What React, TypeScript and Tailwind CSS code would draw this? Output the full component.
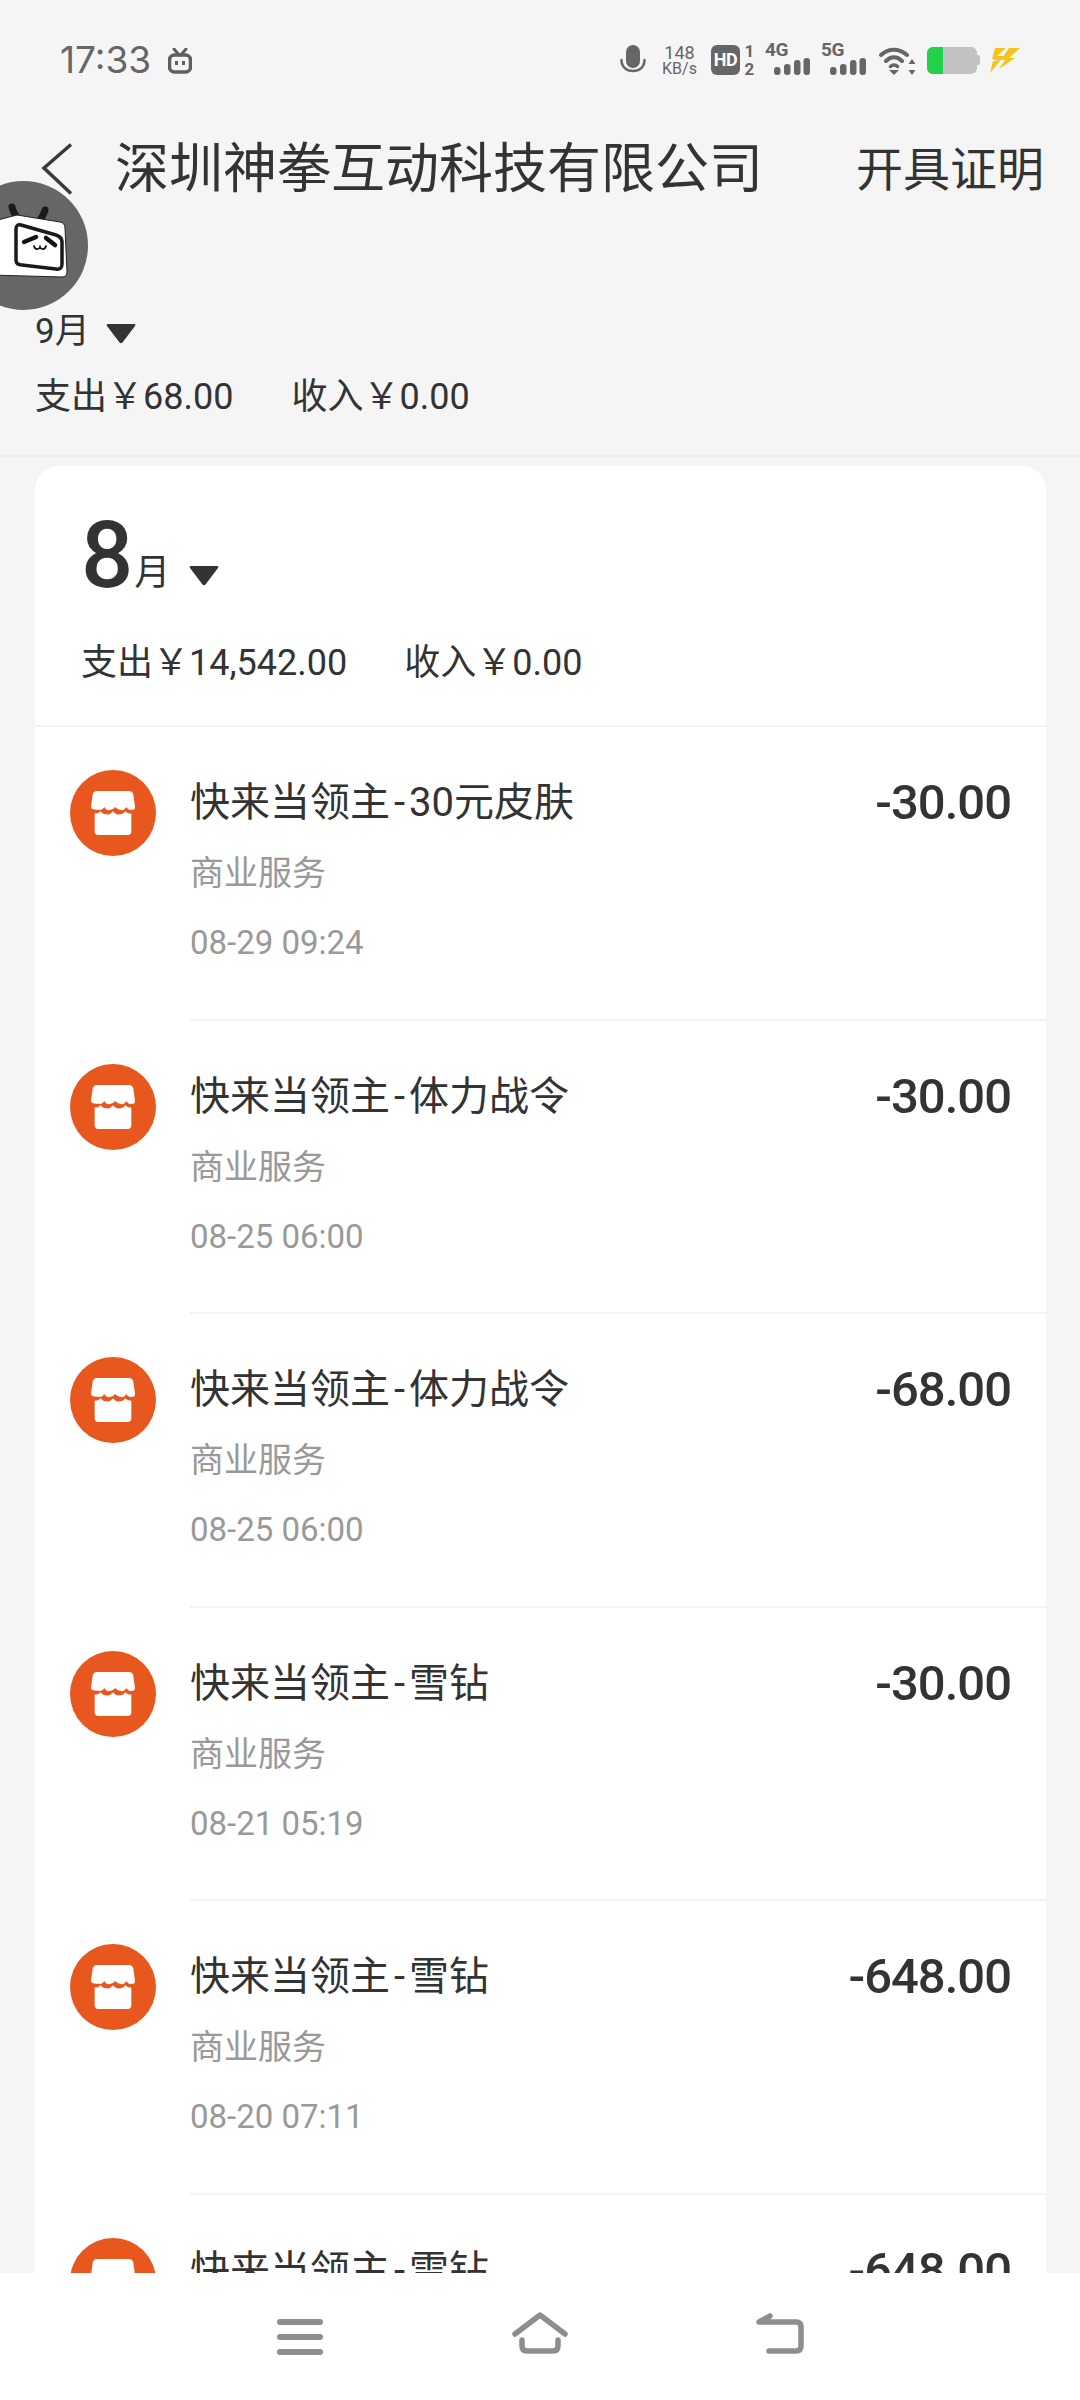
import React from 'react';

const FONT = '"Roboto", "Noto Sans CJK SC", sans-serif';

const rows = [
  { title: '快来当领主-30元皮肤', time: '08-29 09:24', amount: '-30.00' },
  { title: '快来当领主-体力战令', time: '08-25 06:00', amount: '-30.00' },
  { title: '快来当领主-体力战令', time: '08-25 06:00', amount: '-68.00' },
  { title: '快来当领主-雪钻', time: '08-21 05:19', amount: '-30.00' },
  { title: '快来当领主-雪钻', time: '08-20 07:11', amount: '-648.00' },
  { title: '快来当领主-雪钻', amount: '-648.00' },
];

const Signal = ({ label }: { label: string }) => (
  <div className="relative w-[45px] h-[30px]">
    <span className="absolute left-0 top-[-4px] text-[19px] leading-[17px] font-bold text-[#666] tracking-[-0.5px]">{label}</span>
    <svg className="absolute left-[9px] top-[13px]" width="36" height="17" viewBox="0 0 36 17" fill="#666">
      <rect x="0" y="9" width="6.5" height="8" rx="3" />
      <rect x="10" y="6" width="6.5" height="11" rx="3" />
      <rect x="20" y="2" width="6.5" height="15" rx="3" />
      <rect x="29.5" y="0" width="6.5" height="17" rx="3" />
    </svg>
  </div>
);

const StatusBar = () => (
  <div className="h-[120px] flex items-center justify-between pl-[60px] pr-[60px] shrink-0">
    <div className="flex items-center gap-[17px]">
      <span className="text-[37px] leading-[44px] text-[#666]" style={{ fontFamily: '"Inter", sans-serif' }}>17:33</span>
      <svg width="24" height="26" viewBox="0 0 24 26" fill="none" className="mt-[1px]">
        <path d="M6 1l5 6M18 1l-5 6" stroke="#5f5f5f" strokeWidth="3" strokeLinecap="round" />
        <rect x="1.5" y="7" width="21" height="17" rx="5" stroke="#5f5f5f" strokeWidth="3.5" />
        <path d="M8.5 13v4M15.5 13v4" stroke="#5f5f5f" strokeWidth="3" />
      </svg>
    </div>
    <div className="flex items-center">
      <svg width="26" height="30" viewBox="0 0 26 30" fill="none">
        <rect x="6" y="0" width="14" height="23" rx="7" fill="#666" />
        <path d="M1.5 15c0 7 5 11 11.500 11s11.500-4 11.500-11" stroke="#666" strokeWidth="2.500" strokeLinecap="round" />
      </svg>
      <div className="ml-[16px] w-[35px] text-center text-[#666] whitespace-nowrap">
        <div className="text-[18px] leading-[16px]">148</div>
        <div className="text-[16px] leading-[15px]">KB/s</div>
      </div>
      <div className="ml-[14px] w-[29px] h-[30px] rounded-[6px] bg-[#666] text-white text-[18px] leading-[30px] font-bold text-center tracking-[-0.5px]">HD</div>
      <div className="ml-[4px] w-[11px] text-[17px] leading-[18px] font-bold text-[#666] text-center">
        <div>1</div>
        <div>2</div>
      </div>
      <div className="ml-[10px]"><Signal label="4G" /></div>
      <div className="ml-[11px]"><Signal label="5G" /></div>
      <svg className="ml-[13px]" width="36" height="29" viewBox="0 0 36 29" fill="none">
        <path d="M2 9c7.500-7 18-7 26 0M7 15c5-5 11-5 16 0" stroke="#666" strokeWidth="4" strokeLinecap="round" />
        <path d="M11.500 20.500c2-2 5-2 7 0" stroke="#666" strokeWidth="3.500" strokeLinecap="round" />
        <path d="M10 24h10l-5 5z" fill="#666" />
        <path d="M33 13l3.500 5h-7zM33 29l-3.500-5h7z" fill="#666" />
      </svg>
      <div className="ml-[12px] flex items-center">
        <div className="w-[50px] h-[27px] rounded-[6px] bg-[#c2c2c2] overflow-hidden">
          <div className="w-[16px] h-full bg-[#22d04a]" />
        </div>
        <div className="w-[3px] h-[10px] rounded-r-[2px] bg-[#c2c2c2]" />
      </div>
      <svg className="ml-[10px]" width="30" height="25" viewBox="0 0 30 25" fill="#f6c21c">
        <path d="M5 0h11L7 8h7L0 25 3 13h5L2 11z" />
        <path d="M19 0h11L19 10h6L9 21 15 12h-4z" />
      </svg>
    </div>
  </div>
);

const Avatar = () => (
  <div className="absolute left-[-41px] top-[181px] w-[129px] h-[129px] rounded-full bg-[#666] overflow-hidden">
    <svg width="129" height="129" viewBox="-41 181 129 129" fill="none">
      <path d="M12 207c1 5 3 8 6 12M45 210c-1 4-3 7-5 10" stroke="#1a1a1a" strokeWidth="7" strokeLinecap="round" />
      <path d="M-10 222L17 215L60 222Q65 223 65 228L67 272Q67 277 62 277L-10 275z" fill="#fff" stroke="#222" strokeWidth="1" />
      <path d="M21 225L56 235Q62 237 62 242L62 264Q62 270 56 269L22 265Q16 265 16 260L16 229Q16 224 21 225z" fill="#fff" stroke="#1a1a1a" strokeWidth="3.500" />
      <path d="M24 242L36 237M46 238L55 245" stroke="#111" strokeWidth="4.500" strokeLinecap="round" />
      <path d="M34 246c1 4 5 4 6 1c1 3 5 3 6-1" stroke="#111" strokeWidth="1.800" strokeLinecap="round" />
    </svg>
  </div>
);

const Header = () => (
  <div className="h-[96px] flex items-start shrink-0">
    <svg className="ml-[41px] mt-[23px]" width="32" height="52" viewBox="0 0 32 52" fill="none">
      <path d="M30 1.500L3 25l27 25.500" stroke="#3a3a3a" strokeWidth="3.500" />
    </svg>
    <div className="ml-[42px] mt-[20px] text-[54px] leading-[60px] text-[#333] whitespace-nowrap">深圳神拳互动科技有限公司</div>
    <div className="ml-auto mr-[36px] mt-[22px] text-[47px] leading-[56px] text-[#333] whitespace-nowrap">开具证明</div>
  </div>
);

const Triangle = ({ className }: { className: string }) => (
  <svg className={className} width="30" height="20" viewBox="0 0 30 20" fill="#333">
    <path d="M2 0h26q2 0 1 2L16.500 18.500q-1.500 1.500-3 0L1 2q-1-2 1-2z" />
  </svg>
);

const StoreIcon = () => (
  <div className="w-[86px] h-[86px] rounded-full bg-[#e8571e] flex items-center justify-center shrink-0">
    <svg width="44" height="44" viewBox="0 0 48 48" fill="#fff">
      <path d="M6 0h36q3 0 4 3l2 14q0 4-3 3.500c-3 .5-5-.5-6.500-3-1.500 3-4 4-6.500 3-2 0-3.500-1-5.500-3-2 2-3.500 3-5.500 3-2.500 1-5 0-6.500-3-1.500 2.500-3.500 3.500-6.500 3Q0 21 0 17L2 3q1-3 4-3z" />
      <path d="M4 24.500c3 0 5-1 6.500-2.500 2.500 3 5 3.500 7.500 3.500 2.500 0 4.500-1.500 6-3.500 1.500 2 3.500 3.500 6 3.500 2.500 0 5-.5 7.500-3.500 1.500 1.500 3.500 2.500 6.500 2.500V44q0 4-4 4H8q-4 0-4-4z" />
    </svg>
  </div>
);

const Row = ({ title, time, amount }: { title: string; time?: string; amount: string }) => {
  const [name, item] = title.split('-');
  return (
    <div className="flex h-[293.5px] shrink-0">
      <div className="ml-[35px] mt-[43px]"><StoreIcon /></div>
      <div className="ml-[34px] flex-1 border-b-2 border-[#f4f4f4] relative">
        <div className="mt-[51px] text-[40px] leading-[50px] text-[#333] whitespace-nowrap">
          {name}
          <span className="mx-[4px]">-</span>
          {item}
        </div>
        {time && (
          <>
            <div className="mt-[22px] text-[34px] leading-[46px] text-[#999]">商业服务</div>
            <div className="mt-[24px] text-[33px] leading-[46px] text-[#999]">{time}</div>
          </>
        )}
        <div className="absolute right-[35px] top-[50px] text-[49px] leading-[52px] font-medium tracking-[-1px] text-[#333]">{amount}</div>
      </div>
    </div>
  );
};

const BottomNav = () => (
  <div className="h-[127px] bg-white flex items-start shrink-0 z-10 relative">
    <svg className="ml-[277px] mt-[46px]" width="46" height="36" viewBox="0 0 46 36" fill="none" stroke="#8e8e8e" strokeWidth="6" strokeLinecap="round">
      <path d="M3 3h40M3 18h40M3 33h40" />
    </svg>
    <svg className="ml-[189px] mt-[39px]" width="56" height="42" viewBox="0 0 56 42" fill="none" stroke="#8e8e8e" strokeWidth="5.500" strokeLinecap="round" strokeLinejoin="round">
      <path d="M3 22L28 3l25 19" />
      <path d="M10 28v6q0 5 5 5h26q5 0 5-5v-6" />
    </svg>
    <svg className="ml-[188px] mt-[40px]" width="48" height="41" viewBox="0 0 48 41" fill="none" stroke="#8e8e8e" strokeWidth="5.500" strokeLinecap="round" strokeLinejoin="round">
      <path d="M13 38h27q5 0 5-5V14q0-5-5-5H3l11-6" />
    </svg>
  </div>
);

export default function App() {
  return (
    <div className="relative w-[1080px] h-[2400px] overflow-hidden bg-[#f5f5f5] flex flex-col" style={{ fontFamily: FONT }}>
      <StatusBar />
      <Header />
      <Avatar />
      <div className="shrink-0 h-[241px] pl-[35px] border-b-2 border-[#efefef] -mb-[1px]">
        <div className="mt-[93px] flex items-center text-[35px] leading-[46px] text-[#333]">
          9月
          <Triangle className="ml-[16px] mt-[4px]" />
        </div>
        <div className="mt-[18px] flex text-[36px] leading-[48px] text-[#333] whitespace-nowrap">
          <span>支出￥68.00</span>
          <span className="ml-[58px]">收入￥0.00</span>
        </div>
      </div>
      <div className="flex-1 min-h-0 ml-[35px] mr-[34px] mt-[10px] bg-white rounded-t-[24px] overflow-hidden flex flex-col">
        <div className="h-[261px] shrink-0 pl-[46px] border-b-2 border-[#f2f2f2]">
          <div className="pt-[40px] flex items-end text-[#333]">
            <span className="text-[92px] leading-[100px] font-medium">8</span>
            <span className="ml-[1px] mb-[10px] text-[36px] leading-[46px]">月</span>
            <Triangle className="ml-[19px] mb-[20px]" />
          </div>
          <div className="mt-[33px] flex text-[36px] leading-[48px] text-[#333] whitespace-nowrap">
            <span>支出￥14,542.00</span>
            <span className="ml-[57px]">收入￥0.00</span>
          </div>
        </div>
        {rows.map((r, i) => (
          <Row key={i} {...r} />
        ))}
      </div>
      <BottomNav />
    </div>
  );
}
